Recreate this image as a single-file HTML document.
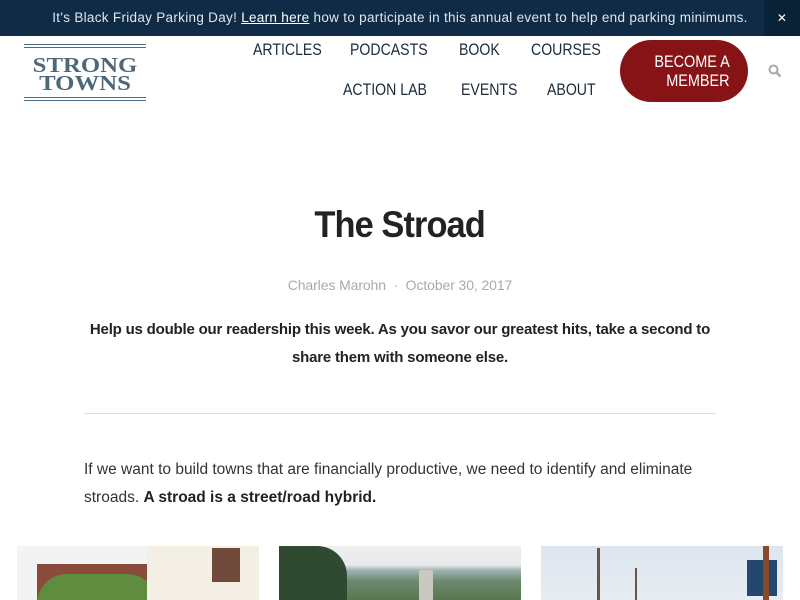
<!DOCTYPE html>
<html><head><meta charset="utf-8"><style>
*{margin:0;padding:0;box-sizing:border-box}
body{width:800px;height:600px;overflow:hidden;background:#fff;font-family:"Liberation Sans",sans-serif;color:#222;position:relative}
.top{position:absolute;left:0;top:0;width:800px;height:36px;background:#0f2b45;color:#dfe6ee;font-size:13.5px;letter-spacing:.3px}
.top .t{position:absolute;left:0;width:800px;top:10px;text-align:center}
.top u{color:#fff}
.top .x{position:absolute;right:0;top:0;width:36px;height:36px;background:#0a2238;color:#fff;text-align:center;line-height:36px;font-size:12px}
.logo{position:absolute;left:24px;top:44px;width:122px;height:56px}
.logo .l{height:1px;background:#4a6f86;margin-bottom:2px}
.logo .w{font-family:"Liberation Serif",serif;font-weight:bold;color:#4e6879;font-size:21px;line-height:18px;text-align:center;transform:scaleX(1.18)}
.nav a{position:absolute;font-size:17px;color:#1a2b3a;text-decoration:none;transform:scaleX(.83);transform-origin:left}
.btn{position:absolute;left:620px;top:40px;width:128px;height:62px;border-radius:31px;background:#861315;color:#fff}
.btn div{position:absolute;right:18px;font-size:17px;transform:scaleX(.85);transform-origin:right;white-space:nowrap}
h1{position:absolute;top:204px;width:800px;text-align:center;font-size:37px;font-weight:bold;color:#222;letter-spacing:-1px}
h1 span{display:inline-block;transform:scaleX(.93)}
.meta{position:absolute;top:277px;width:800px;text-align:center;font-size:14px;color:#aaa;letter-spacing:-.1px}
.intro{position:absolute;left:60px;top:316px;width:680px;text-align:center;font-weight:bold;font-size:15px;line-height:28px;color:#222;letter-spacing:-.2px}
hr{position:absolute;left:84px;top:413px;width:632px;border:0;border-top:1px solid #ddd}
.p{position:absolute;left:84px;top:456px;width:680px;font-size:15.5px;line-height:28px;color:#333;letter-spacing:0}
.img{position:absolute;top:546px;width:242px;height:54px;overflow:hidden}
</style></head><body>
<div class="top"><div class="t">It's Black Friday Parking Day! <u>Learn here</u> how to participate in this annual event to help end parking minimums.</div><div class="x">✕</div></div>
<div class="logo"><div class="l"></div><div class="l"></div><div class="w" style="margin-top:8px">STRONG</div><div class="w">TOWNS</div><div class="l" style="margin-top:5px"></div><div class="l"></div></div>
<div class="nav">
<a style="left:253px;top:40px">ARTICLES</a><a style="left:350px;top:40px">PODCASTS</a><a style="left:459px;top:40px">BOOK</a><a style="left:531px;top:40px">COURSES</a>
<a style="left:343px;top:80px">ACTION LAB</a><a style="left:461px;top:80px">EVENTS</a><a style="left:547px;top:80px">ABOUT</a></div>
<div class="btn"><div style="top:12px">BECOME A</div><div style="top:31px">MEMBER</div></div>
<svg style="position:absolute;left:768px;top:64px" width="14" height="14"><circle cx="5.5" cy="5.5" r="4" stroke="#aaa" stroke-width="2" fill="none"/><path d="M8.5 8.5L12.5 12.5" stroke="#aaa" stroke-width="2.5"/></svg>
<h1><span>The Stroad</span></h1>
<div class="meta">Charles Marohn &nbsp;·&nbsp; October 30, 2017</div>
<div class="intro">Help us double our readership this week. As you savor our greatest hits, take a second to<br>share them with someone else.</div>
<hr>
<div class="p">If we want to build towns that are financially productive, we need to identify and eliminate<br>stroads. <b style="color:#222">A stroad is a street/road hybrid.</b></div>
<div class="img" style="left:17px;background:#f2f4f4"><div style="position:absolute;left:20px;top:18px;width:120px;height:40px;background:#8a4a3c"></div><div style="position:absolute;left:20px;top:28px;width:120px;height:30px;background:#5f8c3e;border-radius:30px 30px 0 0"></div><div style="position:absolute;left:130px;top:0;width:112px;height:54px;background:#f3efe4"></div><div style="position:absolute;left:195px;top:2px;width:28px;height:34px;background:#6f4a3a"></div></div>
<div class="img" style="left:279px;background:linear-gradient(#eceeef 0,#e8eaeb 35%,#9fb2b2 45%,#6c8a6e 65%,#58774f 100%)"><div style="position:absolute;left:0;top:0;width:68px;height:54px;background:#2f4a30;border-radius:0 30px 0 0"></div><div style="position:absolute;left:140px;top:24px;width:14px;height:30px;background:#c9c9c2"></div></div>
<div class="img" style="left:541px;background:linear-gradient(#dde6ef,#e6ecf2)"><div style="position:absolute;left:56px;top:2px;width:3px;height:52px;background:#6b5546"></div><div style="position:absolute;left:94px;top:22px;width:2px;height:32px;background:#6b5546"></div><div style="position:absolute;left:206px;top:14px;width:30px;height:36px;background:#24476f"></div><div style="position:absolute;left:222px;top:0;width:6px;height:54px;background:#8a4a2a"></div></div>
</body></html>
